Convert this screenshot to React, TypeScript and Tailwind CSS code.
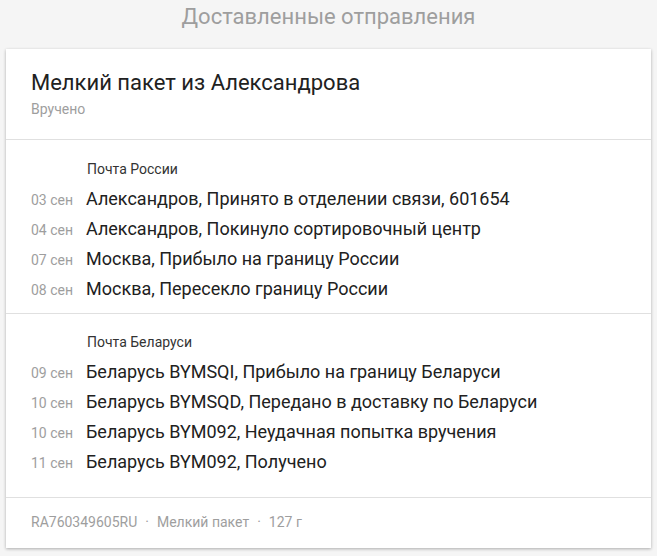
import React from "react";

type Ev = { d: string; t: string };

const russia: Ev[] = [
  { d: "03 сен", t: "Александров, Принято в отделении связи, 601654" },
  { d: "04 сен", t: "Александров, Покинуло сортировочный центр" },
  { d: "07 сен", t: "Москва, Прибыло на границу России" },
  { d: "08 сен", t: "Москва, Пересекло границу России" },
];

const belarus: Ev[] = [
  { d: "09 сен", t: "Беларусь BYMSQI, Прибыло на границу Беларуси" },
  { d: "10 сен", t: "Беларусь BYMSQD, Передано в доставку по Беларуси" },
  { d: "10 сен", t: "Беларусь BYM092, Неудачная попытка вручения" },
  { d: "11 сен", t: "Беларусь BYM092, Получено" },
];

function Section({ label, items, className }: { label: string; items: Ev[]; className: string }) {
  return (
    <div className={className}>
      <div className="pl-[56px] text-[14px] leading-[18px] text-[#333333]">{label}</div>
      <div className="mt-[6px] flex flex-col">
        {items.map((e, i) => (
          <div key={i} className="flex items-baseline h-[30px] leading-[30px]">
            <div className="w-[55px] shrink-0 text-[14px] text-[#9e9e9e]">{e.d}</div>
            <div className="text-[18px] text-[#212121]">{e.t}</div>
          </div>
        ))}
      </div>
    </div>
  );
}

export default function App() {
  return (
    <div
      className="min-h-[556px] w-full bg-[#f5f5f5] pt-[3px] pb-[8px] px-[6px]"
      style={{ fontFamily: "Roboto, 'Noto Sans', sans-serif" }}
    >
      <div className="text-center text-[22px] leading-[28px] text-[#9e9e9e]">Доставленные отправления</div>
      <div className="mt-[18px] bg-white shadow-[0_1px_3px_rgba(0,0,0,0.3)]">
        <div className="pl-[25px] pt-[20px] pb-[21px] border-b border-[#e0e0e0]">
          <div className="text-[22px] leading-[28px] text-[#212121]">Мелкий пакет из Александрова</div>
          <div className="mt-[3px] text-[14px] leading-[18px] text-[#9e9e9e]">Вручено</div>
        </div>
        <Section label="Почта России" items={russia} className="pl-[25px] pt-[20px] pb-[9px] border-b border-[#e0e0e0]" />
        <Section label="Почта Беларуси" items={belarus} className="pl-[25px] pt-[19px] pb-[20px] border-b border-[#e0e0e0]" />
        <div className="pl-[25px] pt-[15px] pb-[17px] text-[14px] leading-[18px] text-[#9e9e9e]">
          RA760349605RU<span className="mx-[8px]">·</span>Мелкий пакет<span className="mx-[8px]">·</span>127 г
        </div>
      </div>
    </div>
  );
}
